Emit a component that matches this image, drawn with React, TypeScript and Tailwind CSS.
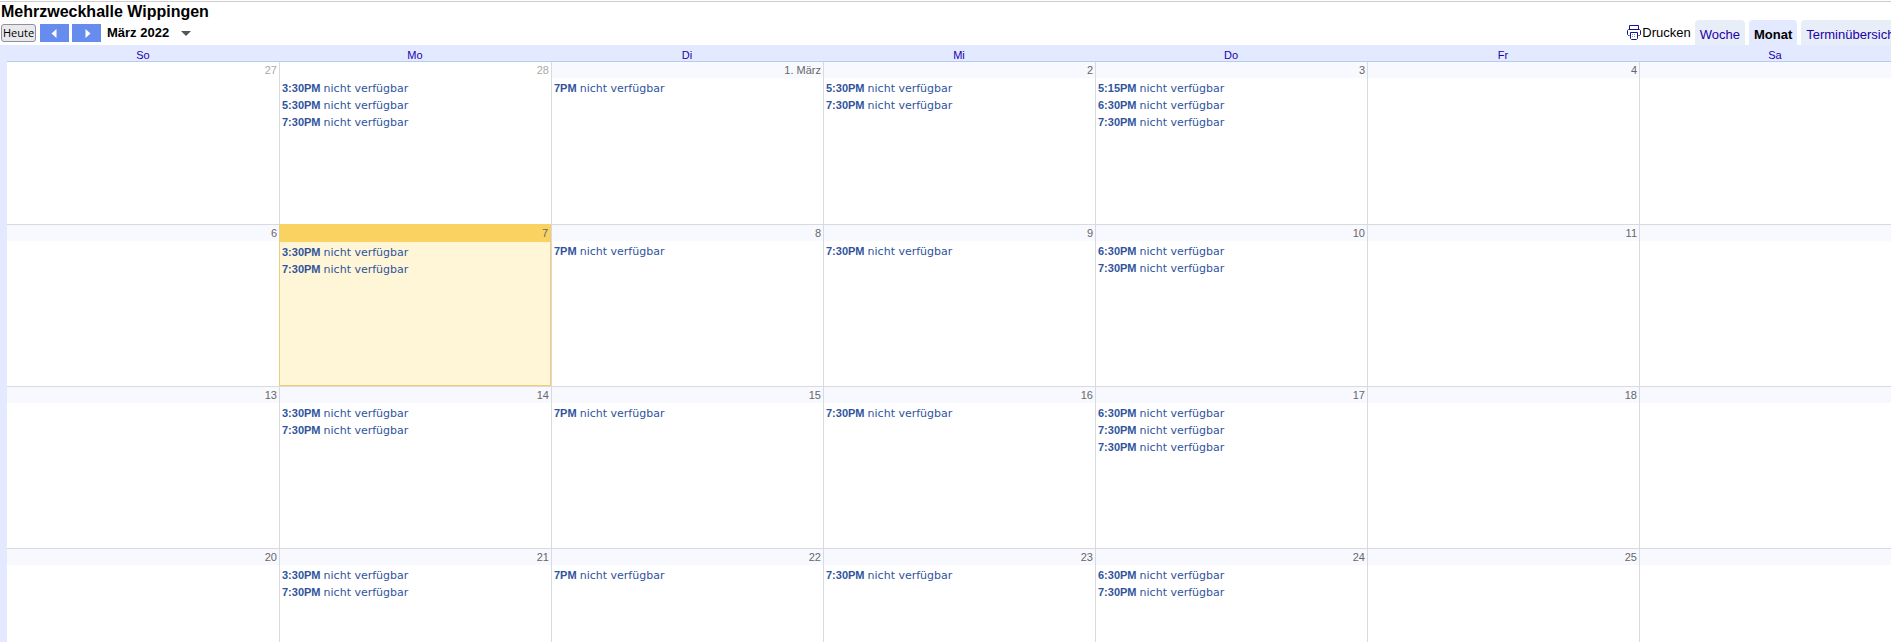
import React from "react";

type Day = { label: string; events: string[]; otherMonth?: boolean; today?: boolean };

const weekdays = ["So", "Mo", "Di", "Mi", "Do", "Fr", "Sa"];

const weeks: Day[][] = [
  [
    { label: "27", events: [], otherMonth: true },
    { label: "28", events: ["3:30PM", "5:30PM", "7:30PM"], otherMonth: true },
    { label: "1. März", events: ["7PM"] },
    { label: "2", events: ["5:30PM", "7:30PM"] },
    { label: "3", events: ["5:15PM", "6:30PM", "7:30PM"] },
    { label: "4", events: [] },
    { label: "", events: [] },
  ],
  [
    { label: "6", events: [] },
    { label: "7", events: ["3:30PM", "7:30PM"], today: true },
    { label: "8", events: ["7PM"] },
    { label: "9", events: ["7:30PM"] },
    { label: "10", events: ["6:30PM", "7:30PM"] },
    { label: "11", events: [] },
    { label: "", events: [] },
  ],
  [
    { label: "13", events: [] },
    { label: "14", events: ["3:30PM", "7:30PM"] },
    { label: "15", events: ["7PM"] },
    { label: "16", events: ["7:30PM"] },
    { label: "17", events: ["6:30PM", "7:30PM", "7:30PM"] },
    { label: "18", events: [] },
    { label: "", events: [] },
  ],
  [
    { label: "20", events: [] },
    { label: "21", events: ["3:30PM", "7:30PM"] },
    { label: "22", events: ["7PM"] },
    { label: "23", events: ["7:30PM"] },
    { label: "24", events: ["6:30PM", "7:30PM"] },
    { label: "25", events: [] },
    { label: "", events: [] },
  ],
];

function PrinterIcon() {
  return (
    <svg width="14" height="15" viewBox="0 0 14 15" fill="none" stroke="#14148c" aria-hidden="true">
      <path d="M2.5 4.5v-4h9v4" />
      <path d="M2.5 10.5h-1l-1-1v-4l1-1h11l1 1v4l-1 1h-1" />
      <path d="M3.5 7.5h7v6l-1 1h-5l-1-1z" fill="#fff" />
      <path d="M5 9.5h4M5 11.5h4" stroke="#8a8ac4" strokeDasharray="1 1" />
    </svg>
  );
}

function DayCell({ day, first, column }: { day: Day; first: boolean; column: number }) {
  const top = first ? "" : day.today ? "border-t border-t-[#f9d262]" : "border-t border-t-[#d9dade]";
  const left = column === 0 ? "" : day.today ? "border-l border-l-[#e8d080]" : "border-l border-l-[#d9dade]";
  const body = day.today ? "bg-[#fff6d8] border-r border-b border-r-[#f0cf70] border-b-[#f0cf70]" : "";
  const strip = day.today
    ? "h-[17px] bg-[#f9d262] text-[#666666]"
    : day.otherMonth
      ? "h-4 text-[#aaaaaa]"
      : "h-4 bg-[#f8f9ff] text-[#666666]";
  return (
    <td className={`h-[162px] p-0 align-top ${top} ${left} ${body}`}>
      <div className={`pr-[2px] text-right text-[11px] leading-4 ${strip}`}>{day.label}</div>
      <ul className="px-[2px]">
        {day.events.map((time, i) => (
          <li key={i} className="h-[17px] leading-[17px]">
            <a href="#termin" className="text-[11px] text-[#2f549c]">
              <b>{time}</b>{" "}
              <span className="font-['DejaVu_Sans',sans-serif]">nicht verfügbar</span>
            </a>
          </li>
        ))}
      </ul>
    </td>
  );
}

export default function App() {
  return (
    <div className="h-screen overflow-hidden bg-white font-['Liberation_Sans',sans-serif] text-black">
      <div className="w-[calc(100%+27px)] pt-px">
        <header className="border-t border-[#cccccc]">
          <h1 className="h-[18px] pl-px text-[16px] leading-[19px] font-bold">Mehrzweckhalle Wippingen</h1>
          <div className="flex h-[25px] items-end pr-[15px]">
            <div className="flex items-center pb-[3px] pl-px">
              <button className="h-[18px] w-[35px] rounded-[3px] border border-[#8f8f9d] bg-[#e9e9ed] text-center font-['Open_Sans',sans-serif] text-[11px] leading-4">
                Heute
              </button>
              <button aria-label="Zurück" className="ml-1 flex h-[18px] w-[29px] items-center justify-center bg-[#668cee] pr-[2px]">
                <svg width="6" height="9" viewBox="0 0 6 9" fill="#fff"><path d="M5.5 0v9L0.5 4.5z" /></svg>
              </button>
              <button aria-label="Weiter" className="ml-[3px] flex h-[18px] w-[29px] items-center justify-center bg-[#668cee] pl-[2px]">
                <svg width="6" height="9" viewBox="0 0 6 9" fill="#fff"><path d="M0.5 0v9L5.5 4.5z" /></svg>
              </button>
              <button className="ml-[6px] flex items-center text-[13px] leading-[18px] font-bold">
                März 2022
                <svg className="ml-3" width="10" height="5" viewBox="0 0 10 5" fill="#555"><path d="M0 0h10L5 5z" /></svg>
              </button>
            </div>
            <nav className="ml-auto flex items-end gap-1 text-[13px] text-[#2200aa]">
              <a href="#drucken" className="flex h-[25px] items-center text-black">
                <PrinterIcon />
                <span className="pl-px">Drucken</span>
              </a>
              <a href="#woche" className="h-[25px] rounded-t-[4px] bg-[#e8eef7] px-[5px] leading-[29px]">Woche</a>
              <a href="#monat" aria-current="page" className="h-[25px] rounded-t-[4px] bg-[#e3e9ff] px-[5px] leading-[29px] font-bold text-black">Monat</a>
              <a href="#uebersicht" className="h-[25px] rounded-t-[4px] bg-[#e8eef7] px-[5px] leading-[29px]">Terminübersicht</a>
            </nav>
          </div>
        </header>
        <main className="bg-[#e3e9ff] px-[7px]">
          <table className="w-full table-fixed border-separate border-spacing-0 bg-white">
            <thead>
              <tr>
                {weekdays.map((name) => (
                  <th key={name} scope="col" className="h-[17px] border-b border-[#b5cdf0] bg-[#e3e9ff] p-0 pt-[5px] text-center text-[11px] leading-[11px] font-normal text-[#2200aa]">
                    {name}
                  </th>
                ))}
              </tr>
            </thead>
            <tbody>
              {weeks.map((week, w) => (
                <tr key={w}>
                  {week.map((day, d) => (
                    <DayCell key={d} day={day} first={w === 0} column={d} />
                  ))}
                </tr>
              ))}
            </tbody>
          </table>
        </main>
      </div>
    </div>
  );
}
